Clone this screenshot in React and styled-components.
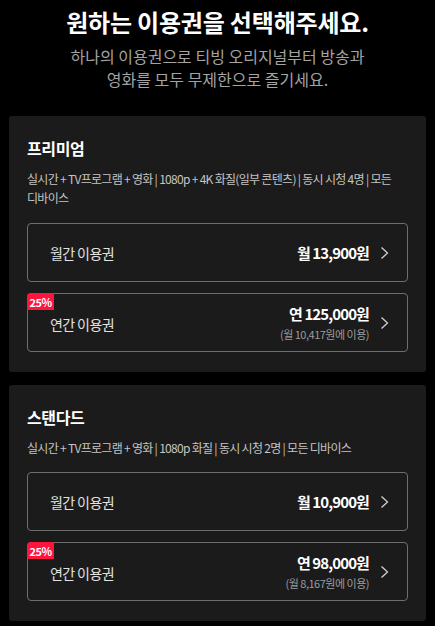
import React from "react";
import styled, { createGlobalStyle } from "styled-components";

const GlobalStyle = createGlobalStyle`
  html, body {
    margin: 0;
    padding: 0;
    background: #000;
  }
  body {
    font-family: "Noto Sans CJK KR", "Noto Sans", sans-serif;
    color: #fff;
    word-break: keep-all;
  }
`;

const Page = styled.div`
  padding: 6px 9px 4px;
  display: flex;
  flex-direction: column;
`;

const Title = styled.h1`
  margin: 0;
  text-align: center;
  font-size: 24px;
  font-weight: 700;
  letter-spacing: -0.2px;
  line-height: 32px;
  color: #fff;
`;

const Subtitle = styled.p`
  margin: 7px 0 25px;
  text-align: center;
  font-size: 16px;
  line-height: 23px;
  letter-spacing: 0;
  color: #a3a3a3;
`;

const Cards = styled.div`
  display: flex;
  flex-direction: column;
  gap: 13px;
`;

const Card = styled.section`
  background: #1b1b1b;
  border-radius: 3px;
  padding: 21px 18px 20px;
`;

const PlanName = styled.h2`
  margin: 0;
  font-size: 16px;
  font-weight: 700;
  line-height: 22px;
  letter-spacing: -0.4px;
  color: #fff;
`;

const Desc = styled.p`
  margin: 10px 0 0;
  font-size: 12px;
  line-height: 19px;
  letter-spacing: -0.7px;
  color: #c4c4c4;
  word-break: keep-all;
`;

const Options = styled.div`
  display: flex;
  flex-direction: column;
  gap: 11px;
  margin-top: ${(props) => props.top}px;
`;

const Option = styled.button`
  position: relative;
  display: flex;
  align-items: center;
  justify-content: space-between;
  width: 100%;
  height: 59px;
  padding: 0 18px 0 22px;
  background: transparent;
  border: 1px solid #6e6e6e;
  border-radius: 4px;
  font-family: inherit;
  color: #fff;
  cursor: pointer;
  text-align: left;
`;

const Badge = styled.span`
  position: absolute;
  top: -1px;
  left: -1px;
  width: 27px;
  height: 17px;
  display: flex;
  align-items: center;
  justify-content: center;
  background: #ff153c;
  border-radius: 4px 0 0 0;
  font-size: 11px;
  font-weight: 700;
  letter-spacing: -0.6px;
  color: #fff;
`;

const Label = styled.span`
  font-size: 14px;
  letter-spacing: -0.6px;
  color: #e2e2e2;
  margin-top: ${(props) => (props.annual ? "3px" : "0")};
`;

const Right = styled.div`
  display: flex;
  align-items: center;
  gap: 11px;
`;

const PriceBox = styled.div`
  display: flex;
  flex-direction: column;
  align-items: flex-end;
`;

const Price = styled.span`
  font-size: 15px;
  font-weight: 700;
  letter-spacing: -0.9px;
  line-height: 20px;
  color: #fff;
`;

const PerMonth = styled.span`
  font-size: 11px;
  letter-spacing: -0.5px;
  line-height: 16px;
  color: #9c9c9c;
  margin-top: 2px;
`;

const Chevron = () => (
  <svg width="9" height="14" viewBox="0 0 9 14" fill="none">
    <path d="M1.5 1.5L7.5 7L1.5 12.5" stroke="#d0d0d0" strokeWidth="1.3" />
  </svg>
);

const plans = [
  {
    name: "프리미엄",
    desc: "실시간 + TV프로그램 + 영화 | 1080p + 4K 화질(일부 콘텐츠) | 동시 시청 4명 | 모든 디바이스",
    gap: 16,
    monthly: "월 13,900원",
    annual: "연 125,000원",
    annualPer: "(월 10,417원에 이용)",
  },
  {
    name: "스탠다드",
    desc: "실시간 + TV프로그램 + 영화 | 1080p 화질 | 동시 시청 2명 | 모든 디바이스",
    gap: 15,
    monthly: "월 10,900원",
    annual: "연 98,000원",
    annualPer: "(월 8,167원에 이용)",
  },
];

export default function App() {
  return (
    <>
      <GlobalStyle />
      <Page>
        <Title>원하는 이용권을 선택해주세요.</Title>
        <Subtitle>
          하나의 이용권으로 티빙 오리지널부터 방송과
          <br />
          영화를 모두 무제한으로 즐기세요.
        </Subtitle>
        <Cards>
          {plans.map((plan) => (
            <Card key={plan.name}>
              <PlanName>{plan.name}</PlanName>
              <Desc>{plan.desc}</Desc>
              <Options top={plan.gap}>
                <Option>
                  <Label>월간 이용권</Label>
                  <Right>
                    <Price>{plan.monthly}</Price>
                    <Chevron />
                  </Right>
                </Option>
                <Option>
                  <Badge>25%</Badge>
                  <Label annual>연간 이용권</Label>
                  <Right>
                    <PriceBox>
                      <Price>{plan.annual}</Price>
                      <PerMonth>{plan.annualPer}</PerMonth>
                    </PriceBox>
                    <Chevron />
                  </Right>
                </Option>
              </Options>
            </Card>
          ))}
        </Cards>
      </Page>
    </>
  );
}
